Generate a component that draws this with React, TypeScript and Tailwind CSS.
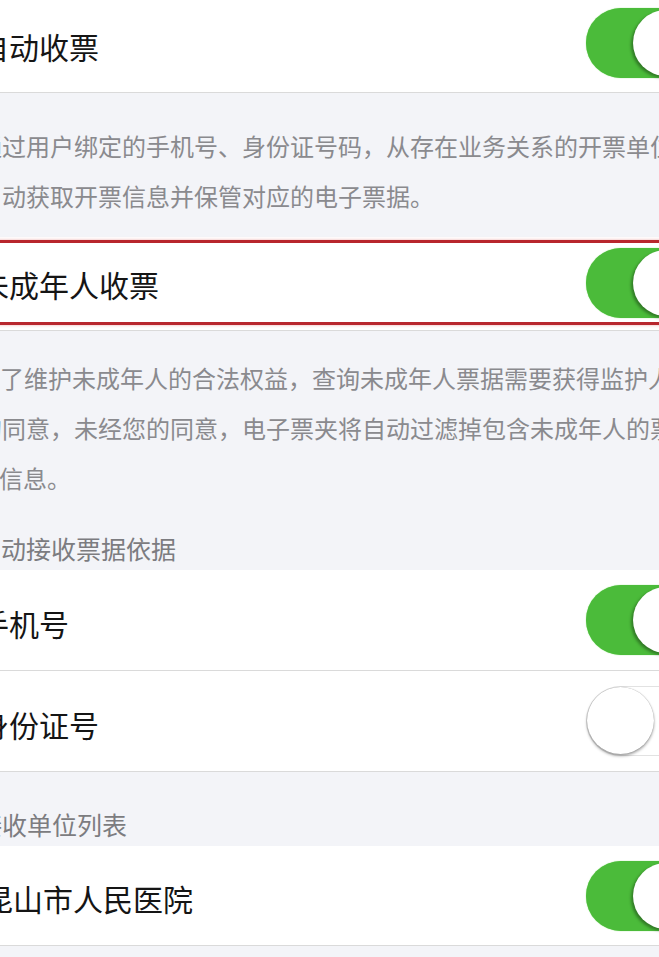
import React from "react";

const font = { fontFamily: '"Noto Sans CJK SC", "Noto Sans", sans-serif' };

function Toggle({ on }: { on: boolean }) {
  if (on) {
    return (
      <div className="relative h-[70px] w-[115px] shrink-0 rounded-full bg-[#4bbb3a] shadow-[0_0_1px_#5fd04a]">
        <div className="absolute right-[2px] top-[2px] h-[66px] w-[66px] rounded-full bg-white shadow-[-2px_2px_3px_rgba(0,0,0,0.35)]" />
      </div>
    );
  }
  return (
    <div className="relative h-[70px] w-[115px] shrink-0 rounded-full border-[1.5px] border-[#e2e2e2] bg-white">
      <div className="absolute left-0 top-[0px] h-[67px] w-[67px] rounded-full bg-white shadow-[0_2px_3px_rgba(0,0,0,0.35),0_0_1px_rgba(0,0,0,0.4)]" />
    </div>
  );
}

function Row({
  label,
  on,
  h,
  ml = "ml-[-21px]",
}: {
  label: string;
  on: boolean;
  h: string;
  ml?: string;
}) {
  return (
    <div
      className={`flex ${h} shrink-0 items-center border-b border-[#dadada] bg-white`}
    >
      <span
        className={`${ml} whitespace-nowrap pt-[5px] text-[30px] leading-none text-[#151515]`}
      >
        {label}
      </span>
      <div className="ml-auto mr-[-42px]">
        <Toggle on={on} />
      </div>
    </div>
  );
}

export default function App() {
  return (
    <div
      className="h-[957px] w-[659px] overflow-hidden bg-[#f3f4f8]"
      style={font}
    >
      <div className="flex flex-col">
        {/* row 1 */}
        <div className="flex h-[93px] items-center border-b border-[#dadada] bg-white">
          <span className="ml-[-21px] whitespace-nowrap pt-[0px] text-[30px] leading-none text-[#151515]">
            自动收票
          </span>
          <div className="ml-auto mr-[-42px] mt-[-7px]">
            <Toggle on />
          </div>
        </div>

        {/* desc 1 */}
        <div className="flex h-[144px] flex-col pt-[28px] text-[24px] leading-[50px] text-[#8a8a8e]">
          <div className="ml-[-22px] whitespace-nowrap">
            通过用户绑定的手机号、身份证号码，从存在业务关系的开票单位
          </div>
          <div className="ml-[-22px] whitespace-nowrap">
            自动获取开票信息并保管对应的电子票据。
          </div>
        </div>

        {/* row 2 highlighted */}
        <div className="relative flex h-[94px] items-center border-b border-[#dadada] bg-white">
          <span className="ml-[-21px] whitespace-nowrap pt-[0px] text-[30px] leading-none text-[#151515]">
            未成年人收票
          </span>
          <div className="ml-auto mr-[-42px] mt-[-2px]">
            <Toggle on />
          </div>
          <div className="pointer-events-none absolute left-[-4px] right-[-4px] top-[3px] h-[85px] border-y-[3px] border-[#b8262d] shadow-[0_0_3px_rgba(220,80,80,0.45)]" />
        </div>

        {/* desc 2 */}
        <div className="flex h-[239px] flex-col pt-[22px] text-[24px] leading-[50px] text-[#8a8a8e]">
          <div className="ml-[-24px] whitespace-nowrap">
            为了维护未成年人的合法权益，查询未成年人票据需要获得监护人
          </div>
          <div className="ml-[-22px] whitespace-nowrap">
            的同意，未经您的同意，电子票夹将自动过滤掉包含未成年人的票
          </div>
          <div className="ml-[-25px] whitespace-nowrap">据信息。</div>
          <div className="ml-[-24px] mt-[25px] whitespace-nowrap text-[25px] leading-[40px] text-[#7c7c80]">
            自动接收票据依据
          </div>
        </div>

        <Row label="手机号" on h="h-[101px]" />
        <Row label="身份证号" on={false} h="h-[101px]" />

        <div className="flex h-[74px] items-end pb-[2px]">
          <span className="ml-[-23px] whitespace-nowrap text-[25px] leading-[40px] text-[#7c7c80]">
            接收单位列表
          </span>
        </div>

        <Row label="昆山市人民医院" on h="h-[100px]" ml="ml-[-17px]" />
      </div>
    </div>
  );
}
